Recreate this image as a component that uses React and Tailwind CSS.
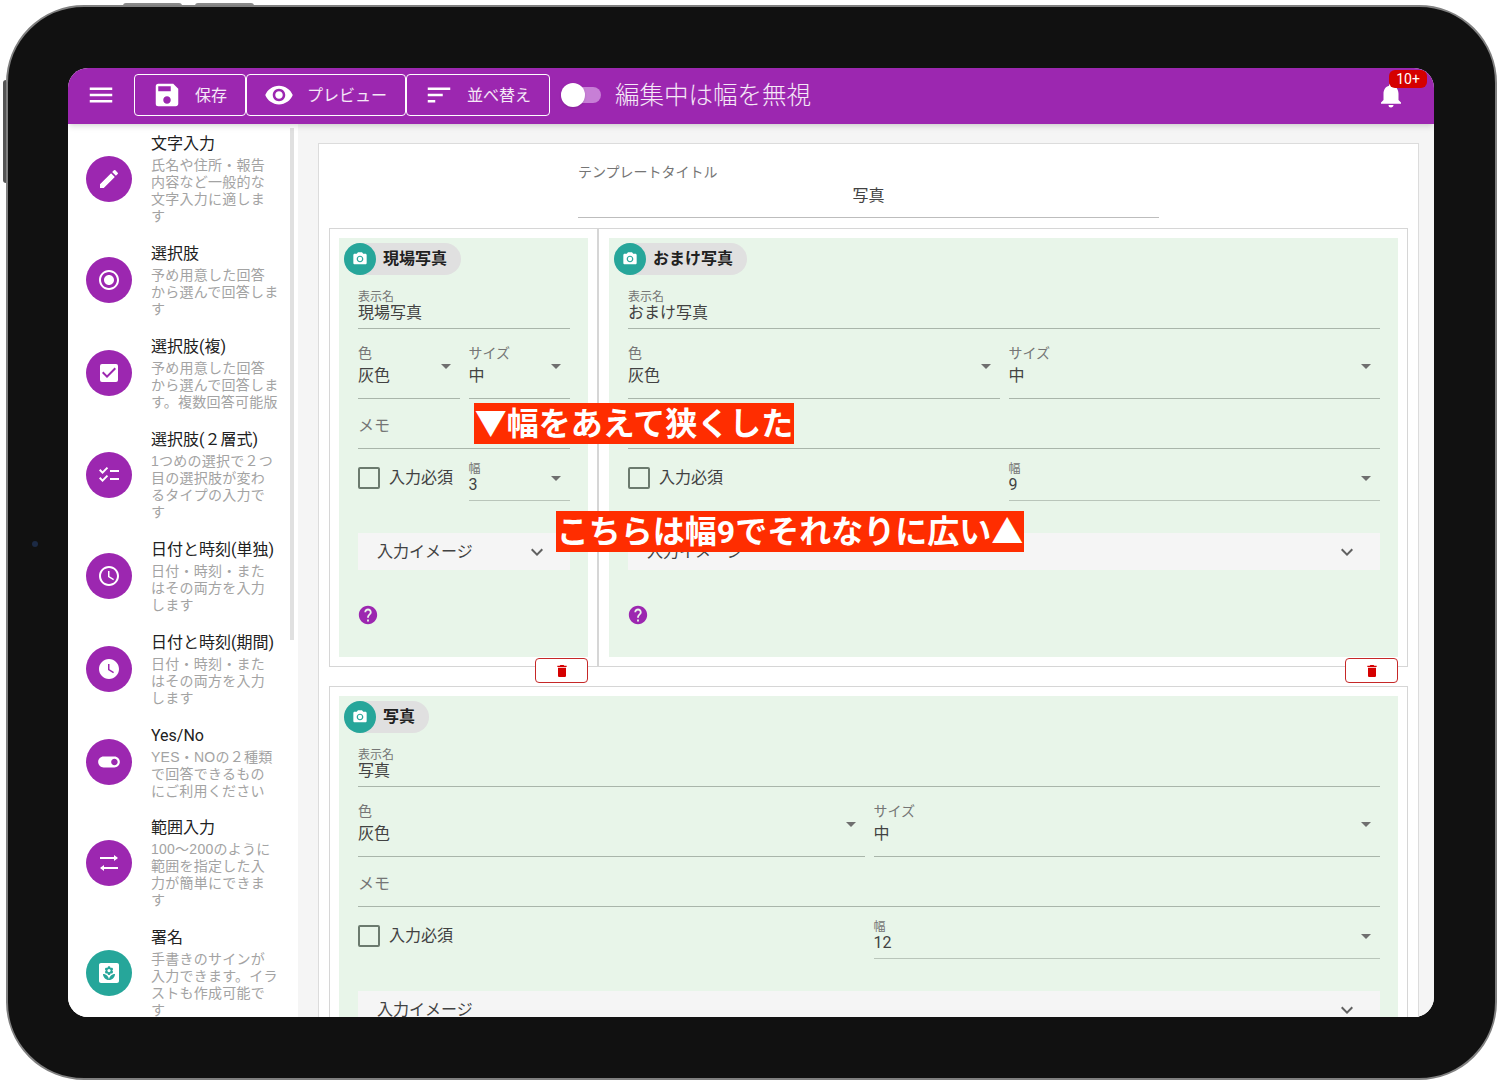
import {
  MdMenu,
  MdSave,
  MdRemoveRedEye,
  MdSort,
  MdEdit,
  MdRadioButtonChecked,
  MdCheckBox,
  MdChecklist,
  MdAccessTime,
  MdWatchLater,
  MdToggleOn,
  MdYard,
  MdCameraAlt,
  MdDelete,
  MdHelp,
  MdNotifications,
  MdExpandMore,
  MdArrowDropDown,
} from "react-icons/md";

// two arrows of equal length, the icon pack's swap icon is staggered
function RangeIcon({ size }) {
  return (
    <svg width={size} height={size} viewBox="0 0 24 24" fill="none" stroke="currentColor" strokeWidth="2">
      <path d="M3 7h17" />
      <path d="M21 7l-4-3v6z" fill="currentColor" strokeWidth="0" />
      <path d="M4 17h17" />
      <path d="M3 17l4-3v6z" fill="currentColor" strokeWidth="0" />
    </svg>
  );
}

const sideItems = [
  { title: "文字入力", lines: ["氏名や住所・報告", "内容など一般的な", "文字入力に適しま", "す"], Icon: MdEdit, size: 24 },
  { title: "選択肢", lines: ["予め用意した回答", "から選んで回答しま", "す"], Icon: MdRadioButtonChecked, size: 24 },
  { title: "選択肢(複)", lines: ["予め用意した回答", "から選んで回答しま", "す。複数回答可能版"], Icon: MdCheckBox, size: 24 },
  { title: "選択肢(２層式)", lines: ["1つめの選択で２つ", "目の選択肢が変わ", "るタイプの入力で", "す"], Icon: MdChecklist, size: 24 },
  { title: "日付と時刻(単独)", lines: ["日付・時刻・また", "はその両方を入力", "します"], Icon: MdAccessTime, size: 24 },
  { title: "日付と時刻(期間)", lines: ["日付・時刻・また", "はその両方を入力", "します"], Icon: MdWatchLater, size: 24 },
  { title: "Yes/No", lines: ["YES・NOの２種類", "で回答できるもの", "にご利用ください"], Icon: MdToggleOn, size: 26, tight: true },
  { title: "範囲入力", lines: ["100〜200のように", "範囲を指定した入", "力が簡単にできま", "す"], Icon: RangeIcon, size: 24 },
  { title: "署名", lines: ["手書きのサインが", "入力できます。イラ", "ストも作成可能で", "す"], Icon: MdYard, size: 24, teal: true },
];

function SideItem({ title, lines, Icon, size, teal, tight }) {
  return (
    <div className={`flex items-center pl-[18px] ${tight ? "-mb-px" : ""}`}>
      <div
        className={`mt-[3px] flex h-[46px] w-[46px] shrink-0 items-center justify-center rounded-full text-white ${
          teal ? "bg-[#26a69a]" : "bg-[#9c27b0]"
        }`}
      >
        <Icon size={size} />
      </div>
      <div className="ml-[19px] pb-[7px] pt-[10px]">
        <div className="text-[16px] leading-[24px] text-[#212121] whitespace-nowrap">{title}</div>
        <div className="mt-px font-['Liberation_Sans','Noto_Sans_CJK_JP',sans-serif] text-[14px] leading-[17px] tracking-[0.25px] text-[#a3a3a3] whitespace-nowrap">
          {lines.map((line) => (
            <div key={line}>{line}</div>
          ))}
        </div>
      </div>
    </div>
  );
}

function HeaderButton({ Icon, label, size, className }) {
  return (
    <div className={`flex h-[42px] items-center rounded-[4px] border border-white pl-[17px] ${className}`}>
      <Icon size={size} className="shrink-0 text-white" />
      <span className="ml-[13px] pt-[2px] text-[16px] text-white/90 whitespace-nowrap">{label}</span>
    </div>
  );
}

function SelectField({ label, value }) {
  return (
    <div className="relative h-[56px] border-b border-[#a9b5aa] pb-[13px]">
      <div className="text-[14px] leading-[20px] text-[#757575]">{label}</div>
      <div className="mt-[3px] text-[16px] leading-[20px] text-[#424242]">{value}</div>
      <MdArrowDropDown size={24} className="absolute right-[2px] top-[11px] text-[#6f6f6f]" />
    </div>
  );
}

function FormCell({ name, title, width, delButton }) {
  return (
    <div className="h-[419px] bg-[#e8f5e9] pt-[5px]">
      <div className="ml-[5px] flex h-8 w-fit items-center rounded-full bg-[#e0e0e0] pr-[14px]">
        <div className="flex h-8 w-8 items-center justify-center rounded-full bg-[#26a69a] text-white">
          <MdCameraAlt size={16} />
        </div>
        <span className="ml-[7px] text-[16px] font-semibold text-[#212121]">{title}</span>
      </div>
      <div className="pl-[19px] pr-[18px]">
        <div className="mt-[14px] h-[40px] border-b border-[#a9b5aa] pt-[2px]">
          <div className="text-[12px] leading-[12px] text-[#757575]">表示名</div>
          <div className="text-[16px] leading-[20px] text-[#424242]">{name}</div>
        </div>
        <div className="mt-[14px] grid grid-cols-2 gap-x-[9px]">
          <SelectField label="色" value="灰色" />
          <SelectField label="サイズ" value="中" />
        </div>
        <div className="mt-[14px] h-[36px] border-b border-[#a9b5aa] pt-[3px] text-[16px] leading-[20px] text-[#757575]">
          メモ
        </div>
        <div className="mt-[12px] grid grid-cols-2 gap-x-[9px]">
          <div className="flex h-[33px] items-center whitespace-nowrap">
            <div className="h-[22px] w-[22px] shrink-0 rounded-[2px] border-2 border-[#6b7a6e]" />
            <span className="ml-[9px] text-[16px] text-[#424242]">入力必須</span>
          </div>
          <div className="relative h-[40px] border-b border-[#b9c5ba] pt-[2px]">
            <div className="text-[12px] leading-[12px] text-[#757575]">幅</div>
            <div className="text-[16px] leading-[20px] text-[#424242]">{width}</div>
            <MdArrowDropDown size={24} className="absolute right-[2px] top-[5px] text-[#6f6f6f]" />
          </div>
        </div>
        <div className="mt-[32px] flex h-[37px] items-center justify-between bg-[#f5f5f5] pl-[19px] pr-[21px]">
          <span className="text-[16px] text-[#424242] whitespace-nowrap">入力イメージ</span>
          <MdExpandMore size={24} className="shrink-0 text-[#616161]" />
        </div>
        <MdHelp size={22} className="-ml-px mt-[34px] text-[#9c27b0]" />
      </div>
      {delButton && (
        <div className="absolute bottom-[-17px] right-[9px] flex h-[25px] w-[53px] items-center justify-center rounded-[4px] border border-[#c62828] bg-white">
          <MdDelete size={16} className="text-[#d50000]" />
        </div>
      )}
    </div>
  );
}

export default function App() {
  return (
    <div className="relative h-[1085px] w-[1500px] overflow-hidden bg-white pl-[6px] pt-[5px] font-[Roboto,'Noto_Sans_CJK_JP',sans-serif]">
      {/* device buttons */}
      <div className="absolute left-[123px] top-[3px] h-[3px] w-[59px] rounded-t-sm bg-[#8a8a8a]" />
      <div className="absolute left-[195px] top-[3px] h-[3px] w-[59px] rounded-t-sm bg-[#8a8a8a]" />
      <div className="absolute left-[3px] top-[80px] h-[103px] w-[3px] rounded-l-sm bg-[#555]" />

      <div className="relative h-[1075px] w-[1491px] rounded-[78px] border-2 border-[#808080] bg-[#111] pl-[60px] pt-[61px]">
        <div className="absolute left-[24px] top-[534px] h-[6px] w-[6px] rounded-full bg-[#1c2a44]" />

        <div className="flex h-[949px] w-[1366px] flex-col overflow-hidden rounded-[20px] bg-white">
          {/* top bar */}
          <header className="relative z-10 flex h-14 shrink-0 items-center bg-[#9c27b0] pb-[2px] pl-[18px] shadow-md">
            <MdMenu size={30} className="text-white" />
            <div className="ml-[18px] flex">
              <HeaderButton Icon={MdSave} label="保存" size={30} className="w-[112px]" />
              <HeaderButton Icon={MdRemoveRedEye} label="プレビュー" size={30} className="w-[160px]" />
              <HeaderButton Icon={MdSort} label="並べ替え" size={30} className="w-[144px]" />
            </div>
            <div className="relative ml-[11px] h-6 w-10">
              <div className="absolute left-0 top-1 h-4 w-10 rounded-full bg-[#c77fd6]" />
              <div className="absolute left-0 top-0 h-6 w-6 rounded-full bg-white shadow" />
            </div>
            <span className="ml-[14px] pt-[2px] text-[24.5px] font-light text-white/90 whitespace-nowrap">編集中は幅を無視</span>
            <div className="relative ml-auto mr-[28px] h-[30px] w-[30px]">
              <MdNotifications size={30} className="text-white" />
              <div className="absolute left-[13px] top-[-10px] flex h-[18px] w-[38px] items-center justify-center rounded-[6px] bg-[#d50000] text-[14px] text-white">
                10+
              </div>
            </div>
          </header>

          <div className="flex min-h-0 flex-1 overflow-hidden">
            {/* field palette */}
            <aside className="flex w-[230px] shrink-0 overflow-hidden bg-white">
              <div className="-mt-[2px] w-[222px] shrink-0">
                {sideItems.map((item) => (
                  <SideItem key={item.title} {...item} />
                ))}
              </div>
              <div className="mt-1 h-[512px] w-[4px] shrink-0 bg-[#e0e0e0]" />
            </aside>

            {/* template form */}
            <main className="min-w-0 flex-1 bg-[#f5f5f5] pl-[20px] pr-[15px] pt-[19px]">
              <div className="border border-[#dcdcdc] bg-white px-[10px] pb-10 pt-[18px]">
                <div className="mx-auto w-[581px] border-b border-[#bdbdbd] pb-[11px]">
                  <div className="text-[14px] leading-[20px] text-[#757575]">テンプレートタイトル</div>
                  <div className="mt-[4px] text-center text-[16px] leading-[20px] text-[#424242]">写真</div>
                </div>

                <div className="mt-[10px] flex">
                  <div className="relative w-[269px] shrink-0 border border-[#d6d6d6] p-[9px]">
                    <FormCell name="現場写真" title="現場写真" width="3" delButton />
                  </div>
                  <div className="relative w-[810px] shrink-0 border border-[#d6d6d6] py-[9px] pl-[10px] pr-[9px]">
                    <FormCell name="おまけ写真" title="おまけ写真" width="9" delButton />
                  </div>
                </div>

                <div className="relative mt-[19px] border border-[#d6d6d6] p-[9px]">
                  <FormCell name="写真" title="写真" width="12" />
                </div>
              </div>
            </main>
          </div>
        </div>
      </div>

      {/* annotations */}
      <div className="absolute left-[474px] top-[403px] flex h-[41px] w-[320px] items-center justify-center bg-[#ff2d00] text-[32px] font-bold text-white whitespace-nowrap">
        ▼幅をあえて狭くした
      </div>
      <div className="absolute left-[556px] top-[511px] flex h-[41px] w-[468px] items-center justify-center bg-[#ff2d00] text-[32px] font-bold text-white whitespace-nowrap">
        こちらは幅9でそれなりに広い▲
      </div>
    </div>
  );
}
